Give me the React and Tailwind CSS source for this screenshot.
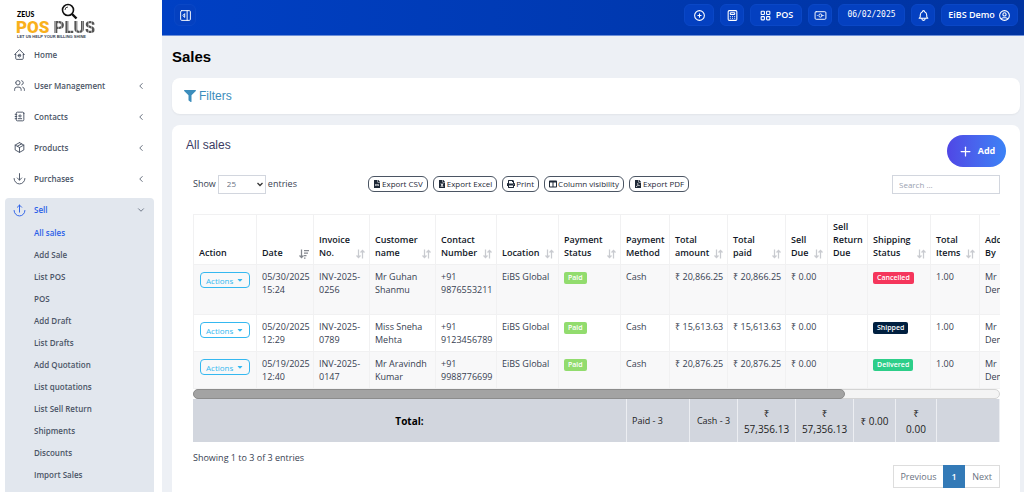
import React from 'react';
import {
  TbUsers,
  TbAddressBook,
  TbPackage,
  TbChevronLeft,
  TbChevronDown,
  TbCirclePlus,
  TbCalculator,
  TbLayoutGrid,
  TbBell,
  TbUserCircle,
  TbPlus
} from 'react-icons/tb';
import { FaFileCsv, FaFileExcel, FaPrint, FaColumns, FaFilePdf, FaFilter, FaCaretDown } from 'react-icons/fa';

const Stroke = ({ children, size = 13 }) => (
  <svg
    width={size}
    height={size}
    viewBox="0 0 24 24"
    fill="none"
    stroke="currentColor"
    strokeWidth="1.75"
    strokeLinecap="round"
    strokeLinejoin="round"
    aria-hidden="true"
  >
    {children}
  </svg>
);

const HomeIcon = () => (
  <Stroke>
    <path d="M5 12H3l9-9 9 9h-2" />
    <path d="M5 12v7a2 2 0 0 0 2 2h10a2 2 0 0 0 2-2v-7" />
    <path d="M9.5 14h5a2.5 2.5 0 1 0-.8 1.9" />
  </Stroke>
);

const PurchaseIcon = () => (
  <Stroke>
    <path d="M12 3v12" />
    <path d="M16 11l-4 4-4-4" />
    <path d="M2 12a10 10 0 0 0 20 0" />
  </Stroke>
);

const SellIcon = () => (
  <Stroke>
    <path d="M12 15V2" />
    <path d="M16 6l-4-4-4 4" />
    <path d="M2 12a10 10 0 0 0 20 0" />
  </Stroke>
);

const SidebarIcon = () => (
  <Stroke>
    <path d="M5 3h14a2 2 0 0 1 2 2v14a2 2 0 0 1-2 2H5a2 2 0 0 1-2-2V5a2 2 0 0 1 2-2z" />
    <path d="M15 3v18" />
    <path d="M10 9l-3 3 3 3z" />
  </Stroke>
);

const CashIcon = () => (
  <Stroke>
    <path d="M4 5h16a2 2 0 0 1 2 2v10a2 2 0 0 1-2 2H4a2 2 0 0 1-2-2V7a2 2 0 0 1 2-2z" />
    <circle cx="12" cy="12" r="3" />
    <path d="M18 12h.01M6 12h.01" />
  </Stroke>
);

const SortIcon = () => (
  <svg className="shrink-0" width="9" height="10" viewBox="0 0 18 20" fill="none" stroke="#c9cbd0" strokeWidth="2.5" aria-hidden="true">
    <path d="M5 1v16M1 13l4 4 4-4M13 19V3M9 7l4-4 4 4" />
  </svg>
);

const SortDescIcon = () => (
  <svg className="shrink-0" width="10" height="10" viewBox="0 0 20 20" fill="none" stroke="#85888f" strokeWidth="2.5" aria-hidden="true">
    <path d="M5 1v16M1 13l4 4 4-4M10 3h10M10 8h8M10 13h5M10 18h3" />
  </svg>
);

const menu = [
  { label: 'Home', icon: <HomeIcon /> },
  { label: 'User Management', icon: <TbUsers size={13} strokeWidth={1.75} />, nested: true },
  { label: 'Contacts', icon: <TbAddressBook size={13} strokeWidth={1.75} />, nested: true },
  { label: 'Products', icon: <TbPackage size={13} strokeWidth={1.75} />, nested: true },
  { label: 'Purchases', icon: <PurchaseIcon />, nested: true }
];

const sellMenu = [
  'All sales',
  'Add Sale',
  'List POS',
  'POS',
  'Add Draft',
  'List Drafts',
  'Add Quotation',
  'List quotations',
  'List Sell Return',
  'Shipments',
  'Discounts',
  'Import Sales'
];

const exportButtons = [
  { label: 'Export CSV', icon: <FaFileCsv size={8} /> },
  { label: 'Export Excel', icon: <FaFileExcel size={8} /> },
  { label: 'Print', icon: <FaPrint size={8} /> },
  { label: 'Column visibility', icon: <FaColumns size={8} /> },
  { label: 'Export PDF', icon: <FaFilePdf size={8} /> }
];

const columns = [
  { label: 'Action', width: 'w-[63px]' },
  { label: 'Date', width: 'w-[57px]', sort: 'desc' },
  { label: 'Invoice No.', width: 'w-[56px]', sort: 'both' },
  { label: 'Customer name', width: 'w-[66px]', sort: 'both' },
  { label: 'Contact Number', width: 'w-[61px]', sort: 'both' },
  { label: 'Location', width: 'w-[62px]', sort: 'both' },
  { label: 'Payment Status', width: 'w-[62px]', sort: 'both' },
  { label: 'Payment Method', width: 'w-[49px]' },
  { label: 'Total amount', width: 'w-[58px]', sort: 'both' },
  { label: 'Total paid', width: 'w-[58px]', sort: 'both' },
  { label: 'Sell Due', width: 'w-[42px]', sort: 'both' },
  { label: 'Sell Return Due', width: 'w-[40px]' },
  { label: 'Shipping Status', width: 'w-[63px]', sort: 'both' },
  { label: 'Total Items', width: 'w-[49px]', sort: 'both' },
  { label: 'Added By', width: 'w-[50px]', sort: 'both' },
  { label: '', width: 'w-[160px]' }
];

const sales = [
  { date: '05/30/2025 15:24', invoice: 'INV-2025-0256', customer: 'Mr Guhan Shanmu', phone: '+91 9876553211', amount: '₹ 20,866.25', shipping: 'Cancelled', color: 'bg-[#f5365c]', height: 'h-[50px]' },
  { date: '05/20/2025 12:29', invoice: 'INV-2025-0789', customer: 'Miss Sneha Mehta', phone: '+91 9123456789', amount: '₹ 15,613.63', shipping: 'Shipped', color: 'bg-[#001f3f]', height: 'h-[37px]' },
  { date: '05/19/2025 12:40', invoice: 'INV-2025-0147', customer: 'Mr Aravindh Kumar', phone: '+91 9988776699', amount: '₹ 20,876.25', shipping: 'Delivered', color: 'bg-[#2dce89]', height: 'h-[37px]' }
];

const Logo = () => (
  <a href="#home" className="relative block h-[39px] pl-4 pt-[10px] leading-none">
    <span className="block h-[9px] pl-px text-[7px] leading-[9px] font-black text-black font-['Lato']">ZEUS</span>
    <span className="flex h-4 gap-1 text-[17px] leading-4 font-black font-['Roboto']">
      <span className="text-[#f9b01c]">POS</span>
      <span className="bg-[repeating-linear-gradient(90deg,#555_0_2px,#999_2px_3px)] bg-clip-text text-transparent">PLUS</span>
    </span>
    <span className="block whitespace-nowrap pl-px text-[4px] leading-1 font-bold text-gray-700 font-['Liberation_Sans']">
      LET US HELP YOUR BILLING SHINE
    </span>
    <svg className="absolute left-[61px] top-[3px]" width="17" height="17" viewBox="0 0 17 17" fill="none" stroke="#111" aria-hidden="true">
      <circle cx="7" cy="7" r="5.5" strokeWidth="1.6" />
      <path d="M11 11l4.500 4.500" strokeWidth="2.4" />
      <path d="M4 7a3 3 0 0 1 3-3" strokeWidth="0.8" />
    </svg>
  </a>
);

const Sidebar = () => (
  <aside className="flex w-[162px] shrink-0 flex-col bg-white text-[8px] font-semibold text-[#4b5566]">
    <Logo />
    <nav className="flex flex-1 flex-col">
      {menu.map(item => (
        <a key={item.label} href="#menu" className="flex h-[31px] items-center gap-2 pl-[13px] pr-4">
          {item.icon}
          <span className="flex-1">{item.label}</span>
          {item.nested && <TbChevronLeft size={10} />}
        </a>
      ))}
      <div className="mx-2 ml-[5px] mt-1 flex-1 rounded-t bg-[#e2e7ee] pb-2">
        <a href="#sell" className="flex h-6 items-center gap-2 pl-2 pr-2 text-[#2a5fe8]">
          <SellIcon />
          <span className="flex-1">Sell</span>
          <TbChevronDown size={10} className="text-[#5b6576]" />
        </a>
        {sellMenu.map((label, i) => (
          <a key={label} href="#sell" className={`flex h-[22px] items-center pl-[29px] ${i === 0 ? 'text-[#2a5fe8]' : ''}`}>
            {label}
          </a>
        ))}
      </div>
    </nav>
  </aside>
);

const headerButton = 'flex h-[22px] items-center justify-center rounded-md border border-[#0a47c6] bg-[#0440c0]';

const Header = () => (
  <header className="flex h-9 items-start justify-between border-b border-[#6d8fd8] bg-linear-to-r from-[#0040c4] to-[#0033a0] pl-3 pr-[6px] pt-1 text-[9px] font-semibold text-white">
    <button aria-label="Toggle sidebar" className={`${headerButton} w-[22px]`}>
      <SidebarIcon />
    </button>
    <div className="flex gap-[6px]">
      <button aria-label="Add new" className={`${headerButton} w-[30px]`}>
        <TbCirclePlus size={13} />
      </button>
      <button aria-label="Calculator" className={`${headerButton} w-[24px]`}>
        <TbCalculator size={13} />
      </button>
      <button className={`${headerButton} w-[52px] gap-1`}>
        <TbLayoutGrid size={13} />
        POS
      </button>
      <button aria-label="Cash register" className={`${headerButton} w-[24px]`}>
        <CashIcon />
      </button>
      <time className={`${headerButton} w-[67px] font-normal text-[8px] font-['DejaVu_Sans_Mono',monospace]`}>06/02/2025</time>
      <button aria-label="Notifications" className={`${headerButton} w-[24px]`}>
        <TbBell size={13} />
      </button>
      <button className={`${headerButton} w-[77px] gap-[3px] whitespace-nowrap`}>
        EiBS Demo
        <TbUserCircle size={13} />
      </button>
    </div>
  </header>
);

const Toolbar = () => (
  <div className="flex h-5 items-center">
    <label className="flex w-[175px] shrink-0 items-center gap-[2px]">
      Show
      <span className="relative flex">
        <select className="h-[19px] w-12 appearance-none border border-[#d2d6de] bg-white pl-2 text-[8px] text-gray-500">
          <option>25</option>
        </select>
        <svg className="pointer-events-none absolute right-[3px] top-[7px]" width="6" height="5" viewBox="0 0 6 5" fill="none" stroke="#333" strokeWidth="1.3" aria-hidden="true">
          <path d="M0.5 1l2.5 2.5L5.5 1" />
        </svg>
      </span>
      entries
    </label>
    <div className="flex gap-[5px]">
      {exportButtons.map(button => (
        <button
          key={button.label}
          className="flex h-4 items-center gap-px whitespace-nowrap rounded-md border border-[#4b5563] px-1 text-[8px] font-medium text-[#1f2937]"
        >
          {button.icon}
          {button.label}
        </button>
      ))}
    </div>
    <input
      type="search"
      aria-label="Search"
      placeholder="Search ..."
      className="ml-auto h-[19px] w-[108px] border border-[#d2d6de] px-[6px] text-[8px] placeholder:text-gray-400"
    />
  </div>
);

const Badge = ({ color, children }) => (
  <span className={`mt-[2px] inline-block rounded-xs px-1 text-[7px] leading-3 font-semibold text-white ${color}`}>{children}</span>
);

const cell = 'border border-[#f1f1f2] pl-[5px] pt-[5px] align-top';

const SalesTable = () => (
  <div>
    <div className="overflow-hidden">
      <table className="w-[996px] table-fixed border-collapse text-left leading-[13px]">
        <thead>
          <tr className="h-[50px] text-[#111827]">
            {columns.map(col => (
              <th key={col.label} className={`border border-[#f1f1f2] pb-[5px] pl-[5px] pr-1 align-bottom font-semibold ${col.width}`}>
                <div className="flex items-end justify-between">
                  <span>{col.label}</span>
                  {col.sort === 'both' && <SortIcon />}
                  {col.sort === 'desc' && <SortDescIcon />}
                </div>
              </th>
            ))}
          </tr>
        </thead>
        <tbody>
          {sales.map(sale => (
            <tr key={sale.invoice} className={`odd:bg-[#f8f8f9] ${sale.height}`}>
              <td className={cell}>
                <button className="ml-px mt-[2px] flex h-4 w-[50px] items-center justify-between rounded border border-[#35b8f0] px-[5px] text-[8px] font-medium text-[#35b8f0]">
                  Actions
                  <FaCaretDown size={8} />
                </button>
              </td>
              <td className={cell}>{sale.date}</td>
              <td className={cell}>{sale.invoice}</td>
              <td className={cell}>{sale.customer}</td>
              <td className={cell}>{sale.phone}</td>
              <td className={`${cell} whitespace-nowrap`}>EiBS Global</td>
              <td className={cell}>
                <Badge color="bg-[#92dc6e]">Paid</Badge>
              </td>
              <td className={cell}>Cash</td>
              <td className={`${cell} whitespace-nowrap`}>{sale.amount}</td>
              <td className={`${cell} whitespace-nowrap`}>{sale.amount}</td>
              <td className={`${cell} whitespace-nowrap`}>₹ 0.00</td>
              <td className={cell}></td>
              <td className={cell}>
                <Badge color={sale.color}>{sale.shipping}</Badge>
              </td>
              <td className={cell}>1.00</td>
              <td className={cell}>
                Mr
                <br />
                Demo
              </td>
              <td className={cell}></td>
            </tr>
          ))}
        </tbody>
      </table>
    </div>

    {/* Horizontal scroll position */}
    <div className="h-[10px] rounded-full border border-[#d4d4d4] bg-[#f4f4f4]">
      <div className="-my-px -ml-px h-[10px] w-[81%] rounded-full border border-[#8c8c8c] bg-[#a3a3a3]"></div>
    </div>

    <table className="w-full table-fixed border-collapse bg-[#d2d6de] text-center text-[#222]">
      <tbody>
        <tr className="h-[43px] text-[10px] leading-4 [&>td]:border-r [&>td]:border-[#eceef2]">
          <td className="font-bold text-black">Total:</td>
          <td className="w-[63px] pl-[5px] text-left text-[9px]">Paid - 3</td>
          <td className="w-[48px] text-[9px]">Cash - 3</td>
          <td className="w-[58px]">₹<br />57,356.13</td>
          <td className="w-[58px]">₹<br />57,356.13</td>
          <td className="w-[42px]">₹ 0.00</td>
          <td className="w-[41px]">₹<br />0.00</td>
          <td className="w-[63px]"></td>
        </tr>
      </tbody>
    </table>
  </div>
);

const App = () => {
  return (
    <div className="flex min-h-screen bg-[#edf0f5] text-[9px] text-[#374151] font-['Open_Sans','Noto_Sans',sans-serif]">
      <Sidebar />
      <div className="flex min-w-0 flex-1 flex-col">
        <Header />
        <main className="flex flex-1 flex-col pl-[10px] pr-1">
          <h1 className="py-[11px] text-[15px] leading-5 font-bold text-black font-['Liberation_Sans',sans-serif]">Sales</h1>

          <section className="rounded-lg bg-white px-3 shadow-xs">
            <a href="#filters" className="flex h-9 items-center gap-[3px] text-[12px] text-[#3c8dbc] font-['Liberation_Sans',sans-serif]">
              <FaFilter size={12} />
              Filters
            </a>
          </section>

          <section className="mt-[11px] flex-1 rounded-t-lg bg-white pl-[21px] pr-5 pt-[10px]">
            <div className="-ml-[7px] -mr-[6px] flex h-8 items-start justify-between">
              <h2 className="text-[12px] leading-5 text-[#3b3b63] font-['Liberation_Sans',sans-serif]">All sales</h2>
              <button className="flex h-8 w-[59px] items-center justify-center gap-[5px] rounded-full bg-linear-to-r from-[#4f46e5] to-[#3b82f6] font-bold text-white">
                <TbPlus size={15} />
                Add
              </button>
            </div>
            <div className="pt-[7px]">
              <Toolbar />
            </div>
            <div className="pt-5">
              <SalesTable />
            </div>
            <p className="pt-[9px] leading-[14px]">Showing 1 to 3 of 3 entries</p>
            <div className="flex justify-end pb-1">
              <div className="flex h-[23px] border border-[#dddddd] text-gray-500">
                <button className="w-[49px]">Previous</button>
                <button className="-my-px w-[22px] bg-[#337ab7] font-semibold text-white">1</button>
                <button className="w-[34px]">Next</button>
              </div>
            </div>
          </section>
        </main>
      </div>
    </div>
  );
};

export default App;
